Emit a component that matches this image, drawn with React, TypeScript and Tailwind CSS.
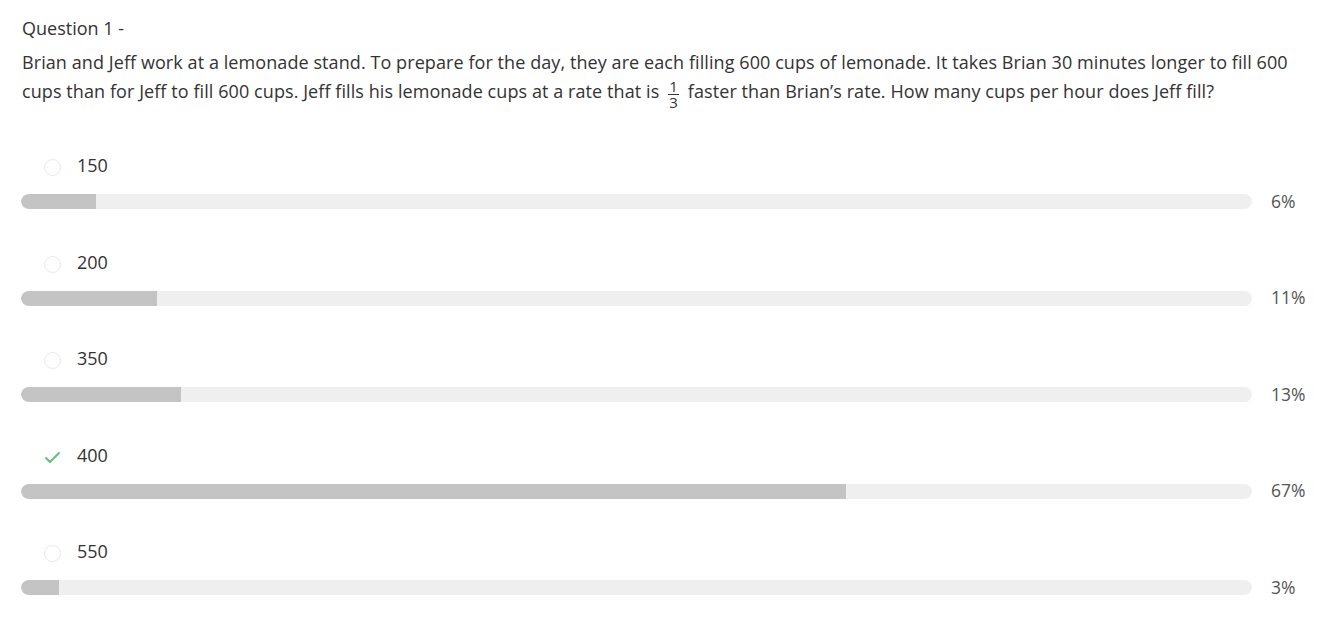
import React from "react";

const options = [
  { label: "150", pct: 6, fill: 75, correct: false },
  { label: "200", pct: 11, fill: 136, correct: false },
  { label: "350", pct: 13, fill: 160, correct: false },
  { label: "400", pct: 67, fill: 825, correct: true },
  { label: "550", pct: 3, fill: 38, correct: false },
];

export default function App() {
  return (
    <div
      className="w-[1334px] h-[640px] bg-white text-[#333333] overflow-hidden"
      style={{ fontFamily: "'Open Sans', Lato, sans-serif" }}
    >
      <div className="pl-[22px] pr-[20px] pt-[16px]">
        <div className="text-[18px] leading-[24px]">Question 1 -</div>
        <p className="mt-[8px] text-[18px] leading-[29px] tracking-[0.08px] whitespace-nowrap">
          Brian and Jeff work at a lemonade stand. To prepare for the day, they are each filling 600 cups of lemonade. It takes Brian 30 minutes longer to fill 600
          <br />
          cups than for Jeff to fill 600 cups. Jeff fills his lemonade cups at a rate that is{" "}
          <span className="inline-flex flex-col items-center align-middle mx-[4px] text-[15px] leading-[13px] translate-y-[1px]">
            <span>1</span>
            <span className="block w-[11px] h-[1px] bg-[#333333] my-[1px]" />
            <span>3</span>
          </span>{" "}
          faster than Brian’s rate. How many cups per hour does Jeff fill?
        </p>
      </div>
      <div className="mt-[46px] flex flex-col">
        {options.map((o) => (
          <div key={o.label} className="h-[96.5px] flex flex-col">
            <div className="flex items-center h-[24px] pl-[44px]">
              <div className="w-[17px] flex justify-center translate-y-[2px]">
                {o.correct ? (
                  <svg width="17" height="14" viewBox="0 0 17 14" fill="none">
                    <path d="M2 8 L6 12 L15 3" stroke="#5cc27a" strokeWidth="2" strokeLinecap="round" strokeLinejoin="round" />
                  </svg>
                ) : (
                  <div className="w-[17px] h-[17px] rounded-full border border-[#e8e8e8]" />
                )}
              </div>
              <span className="ml-[16px] text-[18px]">{o.label}</span>
            </div>
            <div className="mt-[11px] flex items-center">
              <div className="ml-[21px] w-[1231px] h-[15px] rounded-[8px] bg-[#efefef] overflow-hidden">
                <div className="h-full bg-[#c4c4c4] rounded-l-[8px]" style={{ width: o.fill }} />
              </div>
              <span className="ml-[19px] text-[17.5px] text-[#555555] -translate-y-[1px]">{o.pct}%</span>
            </div>
          </div>
        ))}
      </div>
    </div>
  );
}
